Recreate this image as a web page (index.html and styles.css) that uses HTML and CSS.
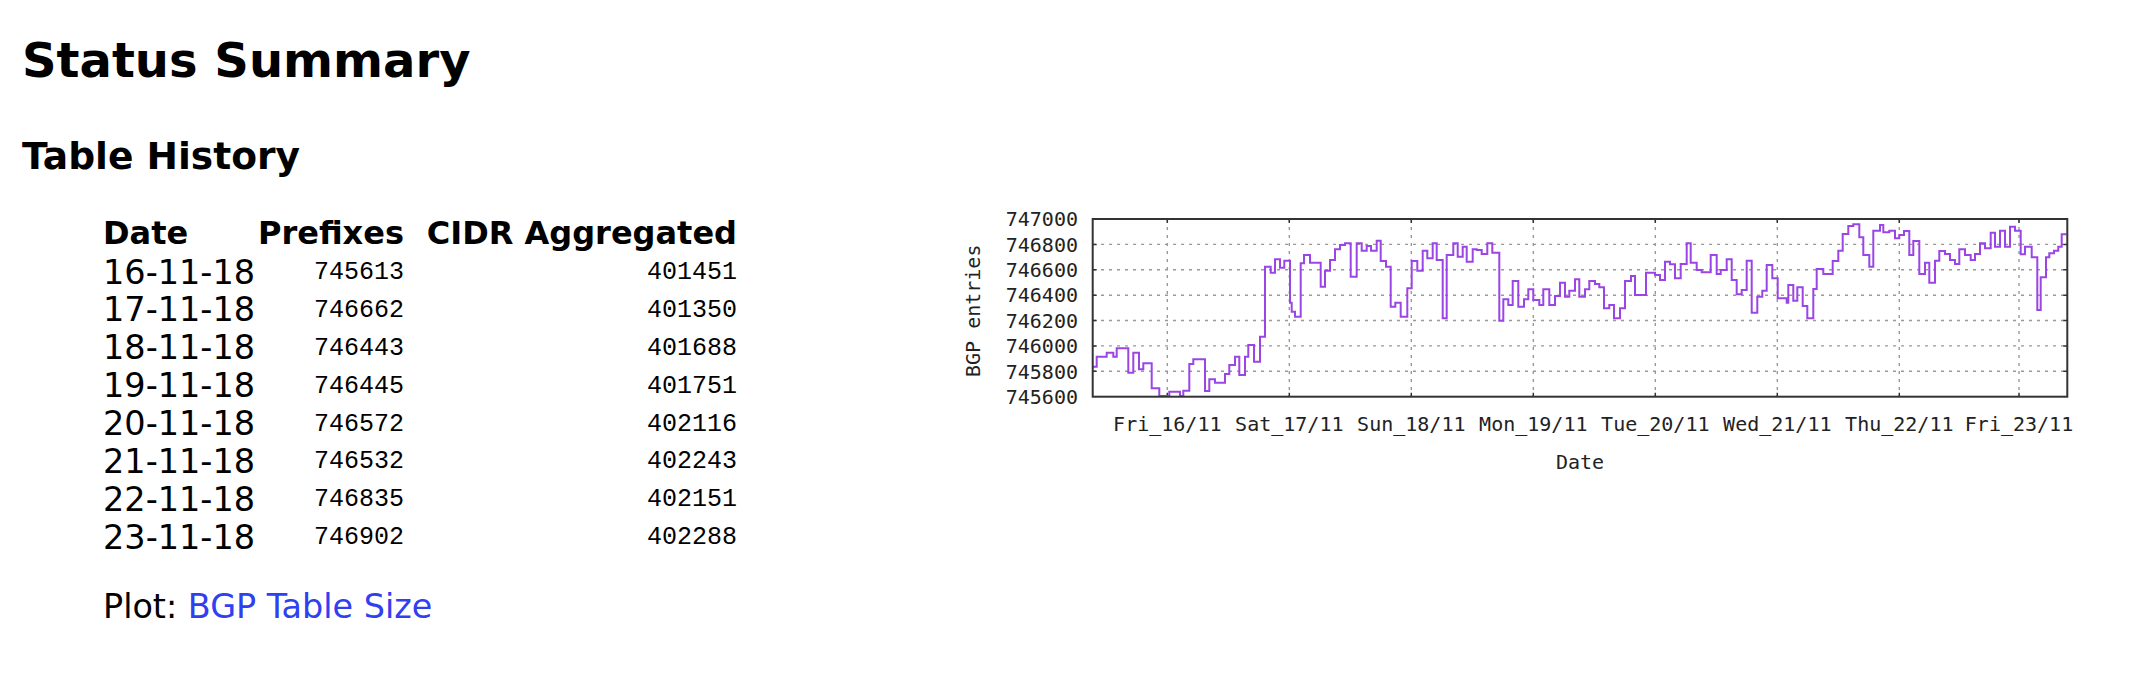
FILE: index.html
```html
<!DOCTYPE html>
<html lang="en">
  <head>
    <meta charset="UTF-8" />
    <meta name="viewport" content="width=device-width, initial-scale=1.0" />
    <title>Status Summary</title>
    <link rel="stylesheet" href="styles.css">
  </head>
  <body>
    <h1>Status Summary</h1>
    <h2>Table History</h2>
    <div class="history">
      <div class="stats">
        <table class="table-history">
          <tr>
            <th class="col-date">Date</th>
            <th class="col-prefixes">Prefixes</th>
            <th class="col-cidr">CIDR Aggregated</th>
          </tr>
          <tr><td class="date">16-11-18</td><td class="num">745613</td><td class="num">401451</td></tr>
          <tr><td class="date">17-11-18</td><td class="num">746662</td><td class="num">401350</td></tr>
          <tr><td class="date">18-11-18</td><td class="num">746443</td><td class="num">401688</td></tr>
          <tr><td class="date">19-11-18</td><td class="num">746445</td><td class="num">401751</td></tr>
          <tr><td class="date">20-11-18</td><td class="num">746572</td><td class="num">402116</td></tr>
          <tr><td class="date">21-11-18</td><td class="num">746532</td><td class="num">402243</td></tr>
          <tr><td class="date">22-11-18</td><td class="num">746835</td><td class="num">402151</td></tr>
          <tr><td class="date">23-11-18</td><td class="num">746902</td><td class="num">402288</td></tr>
        </table>
        <p class="plot-link">Plot: <a href="#">BGP Table Size</a></p>
      </div>

      <svg class="chart" width="1130" height="290" viewBox="0 0 1130 290">
        <!-- grid -->
        <g class="grid">
          <line x1="143" y1="44.4" x2="1117" y2="44.4" />
          <line x1="143" y1="69.8" x2="1117" y2="69.8" />
          <line x1="143" y1="95.2" x2="1117" y2="95.2" />
          <line x1="143" y1="120.5" x2="1117" y2="120.5" />
          <line x1="143" y1="145.9" x2="1117" y2="145.9" />
          <line x1="143" y1="171.3" x2="1117" y2="171.3" />
          <line x1="217.3" y1="19" x2="217.3" y2="196.7" />
          <line x1="339.3" y1="19" x2="339.3" y2="196.7" />
          <line x1="461.3" y1="19" x2="461.3" y2="196.7" />
          <line x1="583.3" y1="19" x2="583.3" y2="196.7" />
          <line x1="705.3" y1="19" x2="705.3" y2="196.7" />
          <line x1="827.3" y1="19" x2="827.3" y2="196.7" />
          <line x1="949.3" y1="19" x2="949.3" y2="196.7" />
          <line x1="1069" y1="19" x2="1069" y2="196.7" />
        </g>
        <!-- ticks -->
        <path class="ticks" d="M217.3 19v4M339.3 19v4M461.3 19v4M583.3 19v4M705.3 19v4M827.3 19v4M949.3 19v4M1069 19v4
                               M217.3 196.7v-4M339.3 196.7v-4M461.3 196.7v-4M583.3 196.7v-4M705.3 196.7v-4M827.3 196.7v-4M949.3 196.7v-4M1069 196.7v-4
                               M142.7 44.4h4M142.7 69.8h4M142.7 95.2h4M142.7 120.5h4M142.7 145.9h4M142.7 171.3h4
                               M1117.3 44.4h-4M1117.3 69.8h-4M1117.3 95.2h-4M1117.3 120.5h-4M1117.3 145.9h-4M1117.3 171.3h-4" />
        <!-- data -->
        <polyline class="series" points="
          142.7,166.7 146.7,166.7 146.7,156.7 156.7,156.7 156.7,152.7 163.3,152.7 163.3,156.7 166.7,156.7
          166.7,148.3 178.3,148.3 178.3,172.7 183.3,172.7 183.3,152.7 189,152.7 189,169.3 193.3,169.3
          193.3,163.3 201.7,163.3 201.7,188.3 209.3,188.3 209.3,196 219.3,196 219.3,191.7 230,191.7
          230,196 233.3,196 233.3,190.7 239.3,190.7 239.3,164 243.3,164 243.3,159.3 255,159.3
          255,191 259.3,191 259.3,179.3 265,179.3 265,182.7 275,182.7 275,174 279.3,174
          279.3,165 285,165 285,156.7 289.3,156.7 289.3,175 295,175 295,156.7 298.3,156.7
          298.3,145 304,145 304,161.7 310,161.7 310,136.7 315,136.7 315,66.7 320.7,66.7
          320.7,72.7 325,72.7 325,59.3 330,59.3 330,67.7 334.3,67.7 334.3,60.7 340,60.7
          340,102.7 341.7,102.7 341.7,111.7 345,111.7 345,116.7 350.7,116.7 350.7,63.3 354,63.3
          354,55 360,55 360,62.7 370.7,62.7 370.7,86.7 375,86.7 375,70.7 380,70.7
          380,60 385,60 385,49.3 390,49.3 390,45 395,45 395,43.3 400.7,43.3
          400.7,76.7 406.7,76.7 406.7,43.3 411.7,43.3 411.7,50.7 416.7,50.7 416.7,46 421,46
          421,50.7 426.7,50.7 426.7,40.7 430.7,40.7 430.7,61 436,61 436,66.7 440.7,66.7
          440.7,106.7 445.3,106.7 445.3,102.7 450.7,102.7 450.7,116.7 457.3,116.7 457.3,88.3 461.7,88.3
          461.7,61 467.3,61 467.3,70.7 472.7,70.7 472.7,50.7 477.3,50.7 477.3,58.3 482.7,58.3
          482.7,43.3 486.7,43.3 486.7,60 492.7,60 492.7,118.3 496.7,118.3 496.7,55 503.3,55
          503.3,43.3 507.7,43.3 507.7,56.7 512.7,56.7 512.7,46.7 516.7,46.7 516.7,61.7 522.7,61.7
          522.7,49.3 526.7,49.3 526.7,50 531.7,50 531.7,54 537.3,54 537.3,43.3 542.3,43.3
          542.3,52.7 549.3,52.7 549.3,120.7 553.3,120.7 553.3,99.3 558.3,99.3 558.3,105 562.7,105
          562.7,81 568.3,81 568.3,106.7 574,106.7 574,99.3 578.3,99.3 578.3,89.3 583.3,89.3
          583.3,100 589.3,100 589.3,105 593.3,105 593.3,89.3 599.3,89.3 599.3,105 605,105
          605,96 610,96 610,82.7 615,82.7 615,96.7 619.3,96.7 619.3,90.7 625,90.7
          625,79.3 629.3,79.3 629.3,96.7 635,96.7 635,89.3 639.3,89.3 639.3,81 645,81
          645,84 649.3,84 649.3,87.3 654,87.3 654,108.3 659.3,108.3 659.3,105 664,105
          664,118.3 670,118.3 670,108.3 675,108.3 675,81 681,81 681,76 685,76
          685,95 696,95 696,72.7 705,72.7 705,75 710,75 710,80 715,80
          715,61.7 720,61.7 720,64.3 725,64.3 725,78.3 730.7,78.3 730.7,64 736.7,64
          736.7,43.3 740.7,43.3 740.7,62.7 746.7,62.7 746.7,70 751.7,70 751.7,72.3 760.7,72.3
          760.7,55 766.7,55 766.7,74 770.7,74 770.7,70 776.7,70 776.7,59.3 781.7,59.3
          781.7,80 786.7,80 786.7,94.3 791.7,94.3 791.7,90 796.7,90 796.7,60.7 801.7,60.7
          801.7,112.7 807.3,112.7 807.3,96.7 812.3,96.7 812.3,90.7 816.7,90.7 816.7,65 822.3,65
          822.3,78.3 827.7,78.3 827.7,98.3 836.7,98.3 836.7,102.7 838.3,102.7 838.3,85 843.3,85
          843.3,100.7 847.3,100.7 847.3,87.3 852.7,87.3 852.7,106 857.3,106 857.3,118.3 863.3,118.3
          863.3,89 866.7,89 866.7,69 873.3,69 873.3,74 882.7,74 882.7,61 888.3,61
          888.3,50.7 892.7,50.7 892.7,34 898.3,34 898.3,26 903.3,26 903.3,24.3 909.3,24.3
          909.3,37.3 913.3,37.3 913.3,55 919.3,55 919.3,66.7 923.3,66.7 923.3,30.7 930,30.7
          930,25 933.3,25 933.3,32.3 939.3,32.3 939.3,30.7 945,30.7 945,38.3 949.3,38.3
          949.3,35 954,35 954,31 959.3,31 959.3,55 963.3,55 963.3,41 969.3,41
          969.3,74 975,74 975,62.7 979.3,62.7 979.3,82.7 985,82.7 985,60.7 989.3,60.7
          989.3,51 995,51 995,54 1000,54 1000,60 1005,60 1005,64 1009.3,64
          1009.3,49.3 1015,49.3 1015,55 1020.7,55 1020.7,60 1025,60 1025,54 1030,54
          1030,43.3 1035,43.3 1035,48.3 1040.7,48.3 1040.7,32.7 1045,32.7 1045,46.7 1050,46.7
          1050,30.7 1055,30.7 1055,46.7 1060,46.7 1060,26.7 1065,26.7 1065,30.7 1070.7,30.7
          1070.7,54.3 1075,54.3 1075,46.7 1081.7,46.7 1081.7,57.3 1087.3,57.3 1087.3,110 1090.7,110
          1090.7,77.3 1096,77.3 1096,57.3 1099.3,57.3 1099.3,53.3 1104,53.3 1104,50.7 1108.3,50.7
          1108.3,46.7 1111.7,46.7 1111.7,34.3 1116.7,34.3" />
        <rect class="frame" x="142.7" y="19" width="974.6" height="177.7" />

        <!-- axis labels -->
        <g class="ylabels">
          <text x="128" y="26.2">747000</text>
          <text x="128" y="51.6">746800</text>
          <text x="128" y="77">746600</text>
          <text x="128" y="102.4">746400</text>
          <text x="128" y="127.7">746200</text>
          <text x="128" y="153.1">746000</text>
          <text x="128" y="178.5">745800</text>
          <text x="128" y="203.9">745600</text>
        </g>
        <g class="xlabels">
          <text x="217.3" y="230.5">Fri_16/11</text>
          <text x="339.3" y="230.5">Sat_17/11</text>
          <text x="461.3" y="230.5">Sun_18/11</text>
          <text x="583.3" y="230.5">Mon_19/11</text>
          <text x="705.3" y="230.5">Tue_20/11</text>
          <text x="827.3" y="230.5">Wed_21/11</text>
          <text x="949.3" y="230.5">Thu_22/11</text>
          <text x="1069" y="230.5">Fri_23/11</text>
          <text x="630" y="269">Date</text>
        </g>
        <text class="ytitle" x="30.5" y="110.8" transform="rotate(-90 30.5 110.8)">BGP entries</text>
      </svg>
    </div>
  </body>
</html>
```

FILE: styles.css
```css
body {
  font-family: "DejaVu Sans", Verdana, sans-serif;
  background: #fff;
  color: #000;
  margin: 0;
  padding: 0 22px;
}
h1 {
  font-size: 48px;
  font-weight: bold;
  line-height: normal;
  margin: 32px 0 0;
}
h2 {
  font-size: 37.6px;
  font-weight: bold;
  line-height: normal;
  margin: 46px 0 22px;
}
.history {
  display: grid;
  grid-template-columns: 928px 1130px;
  align-items: start;
}
.stats {
  padding-left: 81px;
}
.table-history {
  border-collapse: collapse;
  margin-top: 14px;
}
.table-history th,
.table-history td {
  padding: 0;
}
.table-history th {
  font-size: 32px;
  font-weight: bold;
  line-height: 39.5px;
}
.col-date {
  width: 154px;
  text-align: left;
}
.col-prefixes {
  width: 147px;
  text-align: right;
}
.col-cidr {
  width: 333px;
  text-align: right;
}
.date {
  font-size: 33.5px;
  line-height: 37.9px;
  text-align: left;
}
.num {
  font-family: "Liberation Mono", "Courier New", monospace;
  font-size: 25px;
  text-align: right;
}
.plot-link {
  font-size: 33.4px;
  line-height: normal;
  margin: 30px 0 0;
}
.plot-link a {
  color: #3040f0;
  text-decoration: none;
}
.chart {
  display: block;
}
.chart text {
  font-family: "DejaVu Sans Mono", monospace;
  font-size: 20px;
  fill: #222;
}
.grid line {
  stroke: #999;
  stroke-width: 1.4;
  stroke-dasharray: 3 5;
}
.ticks {
  stroke: #333;
  stroke-width: 1.5;
  fill: none;
}
.series {
  fill: none;
  stroke: #9b45e4;
  stroke-width: 2;
  stroke-linejoin: miter;
}
.frame {
  fill: none;
  stroke: #333;
  stroke-width: 2;
}
.ylabels text {
  text-anchor: end;
}
.xlabels text,
.chart .ytitle {
  text-anchor: middle;
}
```
